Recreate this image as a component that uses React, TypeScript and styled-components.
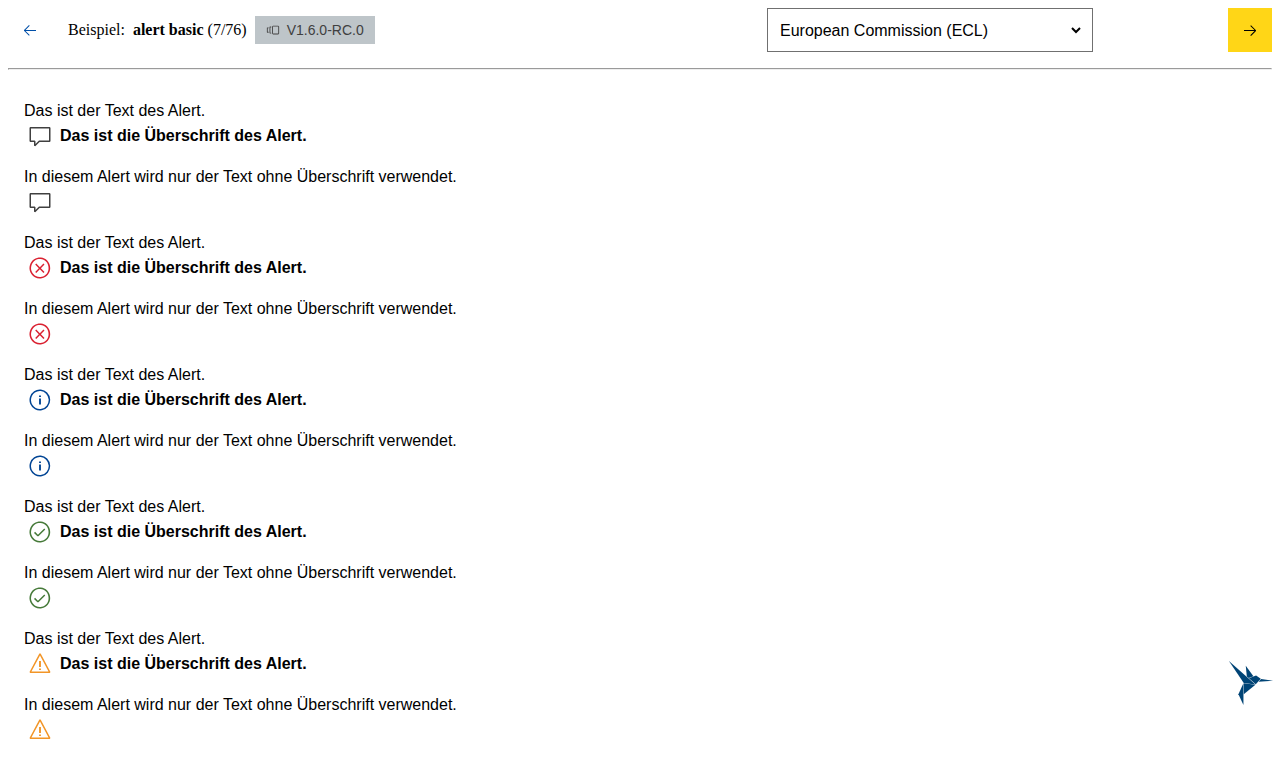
import React from 'react';
import styled, { createGlobalStyle } from 'styled-components';
import {
  VscArrowLeft,
  VscArrowRight,
  VscComment,
  VscError,
  VscInfo,
  VscPass,
  VscVersions,
  VscWarning,
} from 'react-icons/vsc';

const sans = "Arial, 'Liberation Sans', sans-serif";
const serif = "'Times New Roman', 'Liberation Serif', serif";

const GlobalStyle = createGlobalStyle`
  *, *::before, *::after { box-sizing: border-box; }
  body {
    margin: 8px;
    background: #fff;
    color: #000;
    font-family: ${serif};
    font-size: 16px;
  }
`;

const Toolbar = styled.header`
  display: flex;
  align-items: center;
  justify-content: space-between;
  gap: 16px;
`;

const Current = styled.div`
  display: flex;
  align-items: center;
  gap: 16px;
`;

const Caption = styled.div`
  display: flex;
  align-items: center;
  gap: 8px;
  line-height: 20px;
`;

const NavButton = styled.button<{ $primary?: boolean }>`
  display: flex;
  align-items: center;
  justify-content: center;
  width: 44px;
  height: 44px;
  padding: 0;
  border: 0;
  font-size: 16px;
  cursor: pointer;
  color: ${({ $primary }) => ($primary ? '#000' : '#004fa8')};
  background: ${({ $primary }) => ($primary ? '#ffd617' : 'transparent')};
`;

const Badge = styled.span`
  display: inline-flex;
  align-items: center;
  gap: 7px;
  height: 28px;
  padding: 0 11px;
  background: #bec5c9;
  color: #404040;
  font-family: ${sans};
  font-size: 14px;
`;

const Actions = styled.div`
  display: flex;
  flex: 0 0 505px;
  align-items: center;
  justify-content: space-between;
`;

const SelectFrame = styled.div`
  display: flex;
  width: 326px;
  height: 44px;
  padding: 0 8px;
  border: 1px solid #707070;
`;

const ThemeSelect = styled.select`
  flex: 1;
  padding: 0;
  border: 0;
  background: #fff;
  color: #000;
  font-family: ${sans};
  font-size: 16px;
`;

const Divider = styled.hr`
  margin: 16px 0 0;
`;

const AlertList = styled.main`
  display: grid;
  gap: 16px;
  padding: 28px 16px 16px;
  font-family: ${sans};
  line-height: 25px;
`;

const AlertBox = styled.section``;

const AlertText = styled.p`
  margin: 0;
`;

const AlertHeader = styled.div`
  display: flex;
  align-items: flex-end;
  gap: 4px;
  height: 25px;
`;

const AlertIcon = styled.span<{ $color: string }>`
  display: flex;
  justify-content: center;
  width: 32px;
  font-size: 24px;
  color: ${({ $color }) => $color};
`;

const AlertHeading = styled.h2`
  margin: 0;
  font-size: 16px;
  font-weight: 700;
`;

const Logo = styled.svg`
  position: fixed;
  right: 4px;
  bottom: 62px;
  width: 50px;
  height: 50px;
  fill: #004476;
`;

const kinds = [
  { name: 'default', color: '#404040', Icon: VscComment },
  { name: 'error', color: '#da2131', Icon: VscError },
  { name: 'info', color: '#004494', Icon: VscInfo },
  { name: 'success', color: '#467a39', Icon: VscPass },
  { name: 'warning', color: '#f29527', Icon: VscWarning },
];

export default function App() {
  return (
    <>
      <GlobalStyle />
      <Toolbar>
        <Current>
          <NavButton type="button" aria-label="Vorheriges Beispiel">
            <VscArrowLeft />
          </NavButton>
          <Caption>
            <span>Beispiel:</span>
            <span>
              <strong>alert basic</strong> (7/76)
            </span>
            <Badge>
              <VscVersions />
              V1.6.0-RC.0
            </Badge>
          </Caption>
        </Current>
        <Actions>
          <SelectFrame>
            <ThemeSelect aria-label="Theme" defaultValue="ecl-ec">
              <option value="ecl-ec">European Commission (ECL)</option>
            </ThemeSelect>
          </SelectFrame>
          <NavButton type="button" $primary aria-label="Nächstes Beispiel">
            <VscArrowRight />
          </NavButton>
        </Actions>
      </Toolbar>
      <Divider />
      <AlertList>
        {kinds.map(({ name, color, Icon }) => (
          <React.Fragment key={name}>
            <AlertBox>
              <AlertText>Das ist der Text des Alert.</AlertText>
              <AlertHeader>
                <AlertIcon $color={color}>
                  <Icon />
                </AlertIcon>
                <AlertHeading>Das ist die Überschrift des Alert.</AlertHeading>
              </AlertHeader>
            </AlertBox>
            <AlertBox>
              <AlertText>In diesem Alert wird nur der Text ohne Überschrift verwendet.</AlertText>
              <AlertHeader>
                <AlertIcon $color={color}>
                  <Icon />
                </AlertIcon>
              </AlertHeader>
            </AlertBox>
          </React.Fragment>
        ))}
      </AlertList>
      <Logo viewBox="0 0 600 600" role="img" aria-label="KoliBri">
        <path d="M353 322L213 304V434L353 322Z" />
        <path d="M209 564V304L149 434L209 564Z" />
        <path d="M357 316L417 250L361 210L275 244L357 316Z" />
        <path d="M329 218L237 92L250 222L272 241L329 218Z" />
        <path d="M353 318L35 36L213 300L353 318Z" />
        <path d="M391 286L565 272L421 252L391 286Z" />
      </Logo>
    </>
  );
}
